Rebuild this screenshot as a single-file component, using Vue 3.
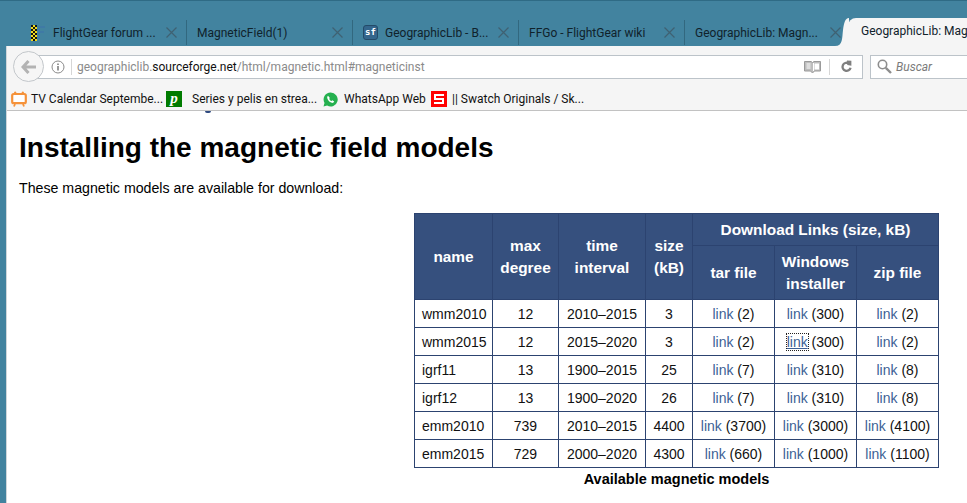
<script setup>
const tabs = [
  { title: 'FlightGear forum ...', icon: 'flag' },
  { title: 'MagneticField(1)' },
  { title: 'GeographicLib - B...', icon: 'sf' },
  { title: 'FFGo - FlightGear wiki' },
  { title: 'GeographicLib: Magn...' }
]
const rows = [
  ['wmm2010', '12', '2010–2015', '3', '2', '300', '2'],
  ['wmm2015', '12', '2015–2020', '3', '2', '300', '2'],
  ['igrf11', '13', '1900–2015', '25', '7', '310', '8'],
  ['igrf12', '13', '1900–2020', '26', '7', '310', '8'],
  ['emm2010', '739', '2010–2015', '4400', '3700', '3000', '4100'],
  ['emm2015', '729', '2000–2020', '4300', '660', '1000', '1100']
]
</script>

<template>
  <div class="window">
    <div class="tabstrip">
      <div v-for="(t, i) in tabs" :key="i" class="tab">
        <span v-if="t.icon === 'flag'" class="fav flag">
          <svg width="20" height="16" viewBox="0 0 20 16">
            <defs>
              <pattern id="chk" width="4" height="4" patternUnits="userSpaceOnUse">
                <rect width="4" height="4" fill="#f0dc1e" />
                <rect width="2" height="2" fill="#111" />
                <rect x="2" y="2" width="2" height="2" fill="#111" />
              </pattern>
            </defs>
            <rect x="0" y="0" width="6" height="16" fill="url(#chk)" />
            <path d="M8 2h6M8 2v12M8 7h5" stroke="#3f78a8" stroke-width="1.5" fill="none" />
          </svg>
        </span>
        <span v-else-if="t.icon === 'sf'" class="fav sf">sf</span>
        <span class="tab-title">{{ t.title }}</span>
        <svg class="close" width="11" height="11" viewBox="0 0 11 11">
          <path d="M.5.5l10 10M10.500.5l-10 10" stroke="#3f6172" stroke-width="1.200" fill="none" />
        </svg>
      </div>
      <div class="tab active">
        <svg class="curve" width="14" height="28" viewBox="0 0 14 28">
          <path d="M0 28C8 28 7 20 8 12C9 5 10 0 14 0V28Z" fill="#f5f5f5" />
        </svg>
        <span class="tab-title">GeographicLib: Mag</span>
      </div>
    </div>

    <div class="chrome">
      <div class="toolbar">
        <div class="back">
          <svg width="16" height="14" viewBox="0 0 16 14">
            <path d="M7.5 1L2 7l5.5 6M2.5 7H15" stroke="#b3b3b3" stroke-width="3" fill="none" />
          </svg>
        </div>
        <div class="urlbar">
          <svg class="info" width="14" height="14" viewBox="0 0 14 14">
            <circle cx="7" cy="7" r="6" stroke="#8a8a8a" stroke-width="1" fill="none" />
            <path d="M7 6v4.500M7 3.500v1.500" stroke="#777" stroke-width="1.500" fill="none" />
          </svg>
          <span class="divider"></span>
          <span class="url">geographiclib.<b>sourceforge.net</b>/html/magnetic.html#magneticinst</span>
          <svg class="reader" width="17" height="14" viewBox="0 0 17 14">
            <path d="M.5 1.500h6.500l1.500 1 1.500-1h6.500v9.500h-6l-2 2-2-2h-6z" fill="#bdbdbd" stroke="#9a9a9a" />
            <path d="M2.500 4h4M2.500 6h4M2.500 8h4" stroke="#fff" stroke-width="1" />
            <path d="M9.500 3v8" stroke="#fff" stroke-width="1" />
            <path d="M10.500 3.500h4.500v6h-4.500z" fill="#fff" />
          </svg>
          <span class="divider second"></span>
          <svg class="reload" width="13" height="13" viewBox="0 0 16 16">
            <path d="M13 9.500A5 5 0 1 1 10.500 4" stroke="#7f7f7f" stroke-width="2.800" fill="none" />
            <path d="M8.500 .5L14 1v6l-5-1z" fill="#7f7f7f" />
          </svg>
        </div>
        <div class="search">
          <svg width="15" height="15" viewBox="0 0 15 15">
            <circle cx="5.500" cy="5.500" r="4.200" stroke="#8d8d8d" stroke-width="1.600" fill="none" />
            <path d="M8.800 8.800L14 14" stroke="#8d8d8d" stroke-width="2.400" />
          </svg>
          <span>Buscar</span>
        </div>
      </div>

      <div class="bookmarks">
        <div class="bm tv">
          <svg width="16" height="16" viewBox="0 0 16 16">
            <rect x="1.200" y="3" width="13.600" height="9.200" rx="1.500" stroke="#f5923a" stroke-width="2.200" fill="#fff" />
            <path d="M4 13l-1 2.500M12 13l1 2.500M5.500 3L3.500 .8M10.500 3l2-2.200" stroke="#f5923a" stroke-width="1.800" fill="none" />
          </svg>
          <span>TV Calendar Septembe...</span>
        </div>
        <div class="bm pin">
          <span class="pin-icon">p</span>
          <span>Series y pelis en strea...</span>
        </div>
        <div class="bm wa">
          <svg width="15" height="15" viewBox="0 0 15 15">
            <path d="M7.500.5a7 7 0 0 0-6 10.500L.5 14.500l3.600-1A7 7 0 1 0 7.500.5z" fill="#25b04f" />
            <path d="M5 3.800c-1 .8-1.100 2.200-.2 3.700 1 1.700 2.400 2.900 4 3.300 1.100.3 2-.2 2.400-1.200l-1.800-1.300-.9.800c-1-.4-1.900-1.300-2.300-2.300l.7-.9z" fill="#fff" />
          </svg>
          <span>WhatsApp Web</span>
        </div>
        <div class="bm sw">
          <svg width="16" height="16" viewBox="0 0 16 16">
            <rect width="16" height="16" fill="#f00" />
            <path d="M3 3h10v2H5v2h8v6H3v-2h8V9H3z" fill="#fff" />
          </svg>
          <span>|| Swatch Originals / Sk...</span>
        </div>
      </div>

      <main class="page">
        <div class="clip-mark"></div>
        <h1>Installing the magnetic field models</h1>
        <p>These magnetic models are available for download:</p>
        <div class="table-wrap">
          <table>
            <colgroup>
              <col class="c1" /><col class="c2" /><col class="c3" /><col class="c4" />
              <col class="c5" /><col class="c6" /><col class="c7" />
            </colgroup>
            <thead>
              <tr class="h1row">
                <th rowspan="2">name</th>
                <th rowspan="2">max<br />degree</th>
                <th rowspan="2">time<br />interval</th>
                <th rowspan="2">size<br />(kB)</th>
                <th colspan="3">Download Links (size, kB)</th>
              </tr>
              <tr class="h2row">
                <th>tar file</th>
                <th>Windows<br />installer</th>
                <th>zip file</th>
              </tr>
            </thead>
            <tbody>
              <tr v-for="(r, ri) in rows" :key="r[0]">
                <td class="model">{{ r[0] }}</td>
                <td>{{ r[1] }}</td>
                <td>{{ r[2] }}</td>
                <td>{{ r[3] }}</td>
                <td><a>link</a> ({{ r[4] }})</td>
                <td><a :class="{ focused: ri === 1 }">link</a> ({{ r[5] }})</td>
                <td><a>link</a> ({{ r[6] }})</td>
              </tr>
            </tbody>
            <caption>Available magnetic models</caption>
          </table>
        </div>
      </main>
    </div>
  </div>
</template>

<style scoped>
.window {
  width: 967px;
  height: 503px;
  box-sizing: border-box;
  overflow: hidden;
  display: flex;
  flex-direction: column;
  background: #42839f;
  border-top: 1px solid #2f6b85;
  font-family: Roboto, "Noto Sans", sans-serif;
}
.tabstrip {
  height: 45px;
  display: flex;
  align-items: flex-end;
  padding-left: 21px;
  flex: none;
}
.tab {
  width: 166px;
  height: 25px;
  flex: none;
  box-sizing: border-box;
  margin-bottom: 1px;
  padding: 0 10px;
  display: flex;
  align-items: center;
  border-right: 1px solid #32687f;
  font-size: 12px;
  color: #10222b;
  position: relative;
}
.tab-title {
  white-space: nowrap;
  flex: 1;
}
.fav {
  flex: none;
}
.flag {
  display: flex;
  width: 22px;
  height: 16px;
}
.sf {
  width: 15px;
  height: 15px;
  margin-right: 7px;
  border-radius: 3px;
  background: #34668c;
  border: 1px solid #234a68;
  box-sizing: border-box;
  color: #fff;
  font: bold 9px/13px "DejaVu Sans Mono", monospace;
  text-align: center;
}
.close {
  flex: none;
  margin-right: -1px;
}
.active {
  width: auto;
  flex: 1;
  height: 28px;
  margin: 0 0 0 -3px;
  padding: 0 0 2px 13px;
  background: #f5f5f5;
  border: 0;
  border-top-left-radius: 8px;
}
.curve {
  position: absolute;
  left: -13px;
  top: 0;
}
.chrome {
  flex: 1;
  margin-left: 6px;
  background: #f5f5f5;
  display: flex;
  flex-direction: column;
  border-left: 1px solid #cfd6da;
  min-height: 0;
}
.toolbar {
  height: 39px;
  flex: none;
  display: flex;
  align-items: center;
  padding: 2px 0 0 6px;
  box-sizing: border-box;
}
.back {
  width: 31px;
  height: 31px;
  box-sizing: border-box;
  border: 1px solid #c3c7cb;
  border-radius: 50%;
  background: #f6f6f6;
  display: flex;
  align-items: center;
  justify-content: center;
  position: relative;
  z-index: 1;
  flex: none;
}
.urlbar {
  width: 832px;
  height: 24px;
  margin-left: -13px;
  padding-left: 20px;
  box-sizing: border-box;
  background: #fff;
  border: 1px solid #bcc3c9;
  border-left: 0;
  display: flex;
  align-items: center;
  flex: none;
}
.info {
  flex: none;
}
.divider {
  width: 1px;
  height: 16px;
  background: #d6d6d6;
  margin: 0 5px 0 6px;
  flex: none;
}
.url {
  flex: 1;
  font-size: 12px;
  color: #8a8a8a;
  white-space: nowrap;
}
.url b {
  font-weight: 400;
  color: #111;
}
.reader {
  flex: none;
  margin-right: 8px;
}
.divider.second {
  margin: 0 10px 0 0;
}
.reload {
  flex: none;
  margin-right: 9px;
}
.search {
  flex: 1;
  height: 24px;
  margin-left: 7px;
  box-sizing: border-box;
  background: #fff;
  border: 1px solid #bcc3c9;
  border-right: 0;
  display: flex;
  align-items: center;
  gap: 4px;
  padding-left: 6px;
  font-size: 12px;
  font-style: italic;
  color: #7a7a7a;
}
.bookmarks {
  height: 26px;
  flex: none;
  box-sizing: border-box;
  border-bottom: 1px solid #c2c2c2;
  display: flex;
  align-items: center;
  padding: 3px 0 0 4px;
  font-size: 12px;
  color: #111;
}
.bm {
  display: flex;
  align-items: center;
  white-space: nowrap;
  flex: none;
  gap: 4px;
}
.bm > * {
  flex: none;
}
.tv {
  width: 155px;
}
.pin {
  width: 157px;
  gap: 10px;
}
.wa {
  width: 108px;
  gap: 6px;
}
.sw {
  gap: 5px;
}
.pin-icon {
  width: 16px;
  height: 16px;
  background: #007b00;
  color: #fff;
  font: italic bold 15px/14px "Liberation Serif", serif;
  text-align: center;
}
.page {
  flex: 1;
  background: #fff;
  padding: 0 0 0 12px;
  font-family: "Liberation Sans", Arial, sans-serif;
  color: #000;
  font-size: 14px;
  position: relative;
  min-height: 0;
}
.clip-mark {
  position: absolute;
  left: 198px;
  top: 0;
  width: 6px;
  height: 2px;
  background: #2f4a80;
  border-radius: 0 0 3px 3px;
}
h1 {
  margin: 21px 0 0;
  font-size: 28px;
  line-height: 31px;
  font-weight: 700;
}
p {
  margin: 17px 0 0;
  line-height: 16px;
  font-size: 14.200px;
}
.table-wrap {
  display: flex;
  justify-content: flex-end;
  margin-top: 17px;
  padding-right: 28px;
}
table {
  border-collapse: collapse;
  table-layout: fixed;
  width: 524px;
  line-height: 22px;
}
caption {
  caption-side: bottom;
  font-weight: 700;
  font-size: 14.500px;
  line-height: 16px;
  padding-top: 3px;
  text-align: center;
}
.c1 { width: 78px; }
.c2 { width: 66px; }
.c3 { width: 87px; }
.c4 { width: 47px; }
.c5 { width: 82px; }
.c6 { width: 82px; }
.c7 { width: 82px; }
th {
  background: #36507e;
  color: #fff;
  font-weight: 700;
  font-size: 15.400px;
  border: 1px solid #2c4370;
  padding: 0;
  text-align: center;
}
.h1row {
  height: 32px;
}
.h2row {
  height: 54px;
}
td {
  height: 27px;
  padding: 0;
  text-align: center;
  border: 1px solid #2c4370;
  color: #111;
}
td.model {
  text-align: left;
  padding-left: 7px;
}
a {
  color: #3d5f95;
}
a.focused {
  text-decoration: underline;
  outline: 1px dotted #222;
}
</style>

<style>
html, body {
  margin: 0;
  background: #fff;
}
</style>
